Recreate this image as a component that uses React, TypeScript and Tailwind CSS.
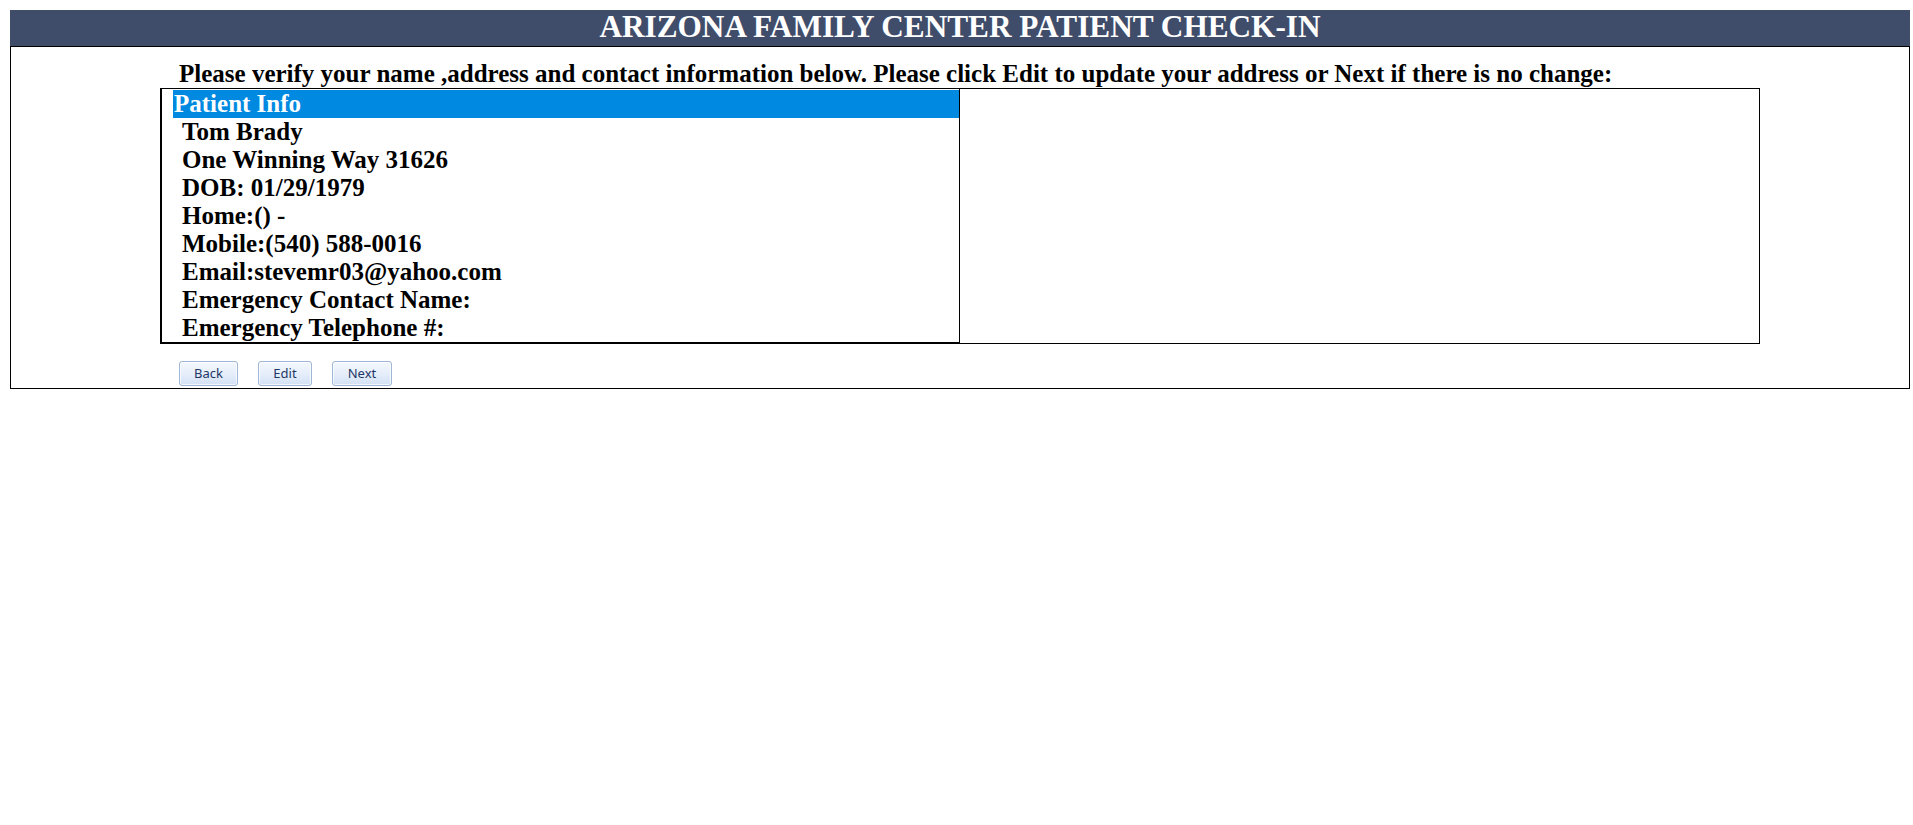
export default function App() {
  const serif = "font-['Liberation_Serif','Times_New_Roman',serif]";
  const rows = [
    "Tom Brady",
    "One Winning Way 31626",
    "DOB: 01/29/1979",
    "Home:() -",
    "Mobile:(540) 588-0016",
    "Email:stevemr03@yahoo.com",
    "Emergency Contact Name:",
    "Emergency Telephone #:",
  ];
  const btn =
    "h-[25px] rounded-[3px] border border-[#9fb6d6] bg-gradient-to-b from-[#f4f8fd] via-[#e6eefa] to-[#d3e1f4] text-[#1d3766] text-[13px] leading-none font-['Noto_Sans','Open_Sans',sans-serif] shadow-[inset_0_0_0_1px_rgba(255,255,255,0.7)]";
  return (
    <div className={`bg-white min-h-screen pt-[10px] pl-[10px] ${serif}`}>
      <div className="w-[1900px]">
        <div className="h-[36px] bg-[#3f4d6b] text-white font-bold text-[31.25px] leading-[34px] text-center">
          ARIZONA FAMILY CENTER PATIENT CHECK-IN
        </div>
        <div className="border border-black h-[343px] pt-[13px]">
          <div className="pl-[168px] text-[25px] font-bold leading-[28px] text-black">
            Please verify your name ,address and contact information below. Please click Edit to update your address or Next if there is no change:
          </div>
          <div className="flex ml-[149px] w-[1600px] h-[256px]">
            <div className="w-[800px] border-l-2 border-b-2 border-t border-r border-black pl-[11px] pt-px">
              <div className="bg-[#0089e1] text-white text-[25px] font-bold leading-[28px] pl-px">
                Patient Info
              </div>
              {rows.map((r) => (
                <div key={r} className="text-[25px] font-bold leading-[28px] text-black pl-[9px]">
                  {r}
                </div>
              ))}
            </div>
            <div className="flex-1 border-t border-r border-b border-black"></div>
          </div>
          <div className="flex gap-[20px] pl-[168px] mt-[17px]">
            <button className={`${btn} w-[59px]`}>Back</button>
            <button className={`${btn} w-[54px]`}>Edit</button>
            <button className={`${btn} w-[60px]`}>Next</button>
          </div>
        </div>
      </div>
    </div>
  );
}
